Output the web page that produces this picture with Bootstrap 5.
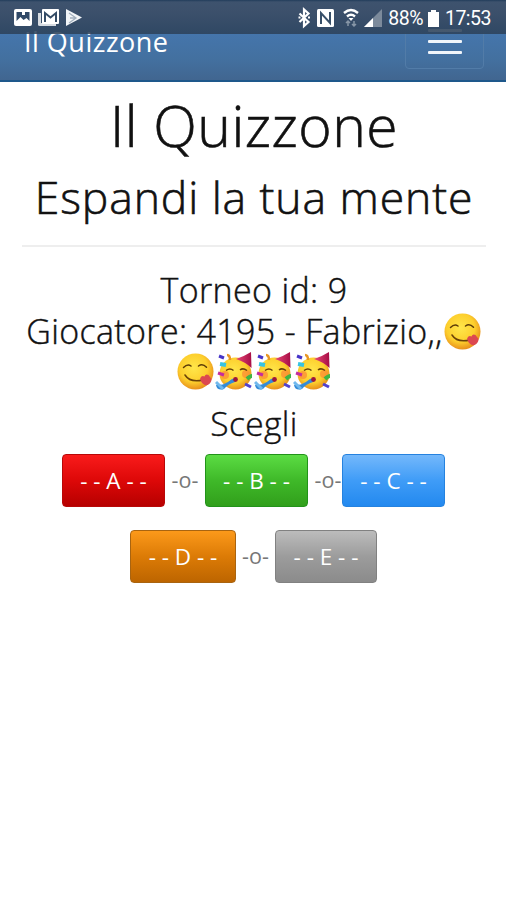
<!DOCTYPE html>
<html lang="it">
<head>
<meta charset="utf-8">
<meta name="viewport" content="width=device-width, initial-scale=1">
<title>Il Quizzone</title>
<link href="https://cdn.jsdelivr.net/npm/bootstrap@5.3.0/dist/css/bootstrap.min.css" rel="stylesheet">
<style>
body{font-family:"Open Sans","Noto Sans",sans-serif;color:#111;min-height:900px;overflow:hidden}
.statusbar{height:34px;background:linear-gradient(rgba(31,57,86,.94) 0,rgba(61,79,103,.9) 2px,rgba(59,76,100,.9) 12px,rgba(45,66,90,.88) 33px);z-index:5;padding:3px 15px 0 14px;font-family:Roboto,sans-serif;font-size:19.5px;letter-spacing:-.5px;line-height:31px;color:#fff}
.topnav{height:82px;background:linear-gradient(#4576ad 30px,#43709f 60px,#416690);border-bottom:2px solid #1e588b;padding:14px 22px 0 24px}
.topnav .navbar-brand{font-size:27px;line-height:36px;letter-spacing:.5px;margin-top:10px;color:#fff}
.topnav .navbar-toggler{width:79px;height:55px;border:1px solid #527ca8;border-radius:4px;gap:8px;background:none}
.bar{width:34px;height:3px;border-radius:1px;background:#f0f5fa}
.content{padding:0 20px 0 22px}
.thin-text{font-weight:300;-webkit-text-stroke:.6px #111}
.title{font-size:57px;line-height:62px;padding-top:12px;letter-spacing:.45px}
.subtitle{font-size:44.5px;line-height:60px;margin-top:11px;letter-spacing:.9px}
.rule{height:2px;background:#eee;margin-top:18px}
.info{font-size:34px;line-height:40.5px;padding-top:23px;letter-spacing:.34px}
.choose{font-size:33.5px;line-height:40px;margin-top:12px;letter-spacing:.4px}
.info.thin-text,.choose.thin-text{-webkit-text-stroke-width:.4px}
.emo{width:39px;height:40px}
.answers{margin-top:11px}
.answers-next{margin-top:23px}
.answer{height:53px;width:103px;border-radius:4px;font-size:22.5px;line-height:1;padding:1px 0 0;color:#fff!important;border:1px solid;white-space:pre}
.a-red{background:linear-gradient(#f91b1b,#dd0808 50%,#b60000);border-color:#b80808}
.a-green{background:linear-gradient(#5bdc43,#3fb929 50%,#319f1b);border-color:#22931a}
.a-blue{background:linear-gradient(#74b8fb,#3f9cf7 50%,#2389ef);border-color:#2582df}
.a-orange{background:linear-gradient(#fc991a,#dc7b06 50%,#bd6500);border-color:#a96410;width:106px}
.a-gray{background:linear-gradient(#bcbcbc,#9c9c9c 50%,#8b8b8b);border-color:#818181;width:102px}
.answers,.answers-next{padding-right:1px}
.sep{color:#777;font-size:21.5px;line-height:51px;width:40px}
.sep-tight{width:34px;padding-left:6px}
.answers-next .sep{width:39px}
</style>
<script src="https://cdn.jsdelivr.net/npm/bootstrap@5.3.0/dist/js/bootstrap.bundle.min.js"></script>
</head>
<body class="bg-white">
<svg width="0" height="0" class="position-absolute" aria-hidden="true">
<defs>
<radialGradient id="face" cx=".45" cy=".4" r=".6"><stop offset="0" stop-color="#ffe64a"/><stop offset=".65" stop-color="#fdcf2d"/><stop offset="1" stop-color="#e8901c"/></radialGradient>
<linearGradient id="hat"><stop offset="0" stop-color="#e64a78"/><stop offset="1" stop-color="#a80d45"/></linearGradient>
<symbol id="yum" viewBox="0 0 39 40">
<circle cx="19.5" cy="20.5" r="18" fill="url(#face)"/>
<path d="M7.500 16.500q4-4 7.500-1.500M22.500 15q4-3 8 1.300" fill="none" stroke="#5e3d08" stroke-width="1.500" stroke-linecap="round"/>
<path d="M9 24q5 8 18 5" fill="none" stroke="#6b4208" stroke-width="1.500" stroke-linecap="round"/>
<path d="M24 28q1-4 4.500-2.500 1-3 4-1.500l3 4q0 4-4 6-5 1-7.500-6z" fill="#dc4850"/>
</symbol>
<symbol id="party" viewBox="0 0 39 40">
<circle cx="20.500" cy="22.500" r="16" fill="url(#face)"/>
<circle cx="10" cy="24" r="4" fill="#fb8d35" opacity=".75"/><circle cx="31" cy="23" r="4" fill="#fb8d35" opacity=".75"/>
<path d="M11 19.500q4-3 7.500 0M25 19q3-2.500 7 .5" fill="none" stroke="#654009" stroke-width="1.500"/>
<path d="M21 8q7-2 15-7l.5 16q-6-6-15.500-9z" fill="url(#hat)"/>
<path d="M3 33q4 3 14-5l4-1-1 4q-7 2-11 7-7 2-8-4z" fill="#348bd8"/><path d="M1 31l7 7" stroke="#71b9ed" stroke-width="3"/>
<circle cx="20.500" cy="28.500" r="2.400" fill="#9c183a"/>
<path d="M4 5l5 2" stroke="#4634c8" stroke-width="3"/><path d="M12 4q3 0 3 5" stroke="#e99825" stroke-width="2.500" fill="none"/>
<path d="M5 13l6 1" stroke="#37c4e4" stroke-width="4"/><path d="M3 22l6 2" stroke="#c32d9e" stroke-width="3"/><path d="M32 28q3-3 5-3" stroke="#3eb544" stroke-width="4"/><path d="M30 33l6 3" stroke="#5142cf" stroke-width="3"/>
</symbol>
</defs>
</svg>
<div class="statusbar position-absolute top-0 start-0 w-100 d-flex align-items-start">
<svg width="74" height="30" viewBox="14 3 74 30" aria-hidden="true">
<rect x="14" y="9" width="18" height="17" rx="2" fill="#fff"/><path d="M16.500 12h13v9l-3-3-3 2-3-3-4 4z" fill="#304967"/><path d="M22 12h3v3h-3z" fill="#fff"/>
<path d="M38 13v12q0 1 2 1h16v-3H41V13z" fill="#d7dce2"/><rect x="42" y="9" width="17" height="15" rx="1" fill="#fff"/><path d="M45 22V13l5.500 4.500L56 13v9" fill="none" stroke="#344b65" stroke-width="2"/>
<path d="M66 9l16 8.500L66 26z" fill="#f2f5f8"/><path d="M69 13l7 5-7 5M70 18h5" fill="none" stroke="#a2afbd" stroke-width="1.300"/>
</svg>
<svg class="ms-auto flex-shrink-0" width="86" height="30" viewBox="297 3 86 30" aria-hidden="true">
<path d="M299.500 13.500l9 8.500-4.500 4V9.500l4.500 4-9 8.500" fill="none" stroke="#fff" stroke-width="2.200"/><path d="M298.500 17.500h2M308 17.500h2" stroke="#fff" stroke-width="2"/>
<rect x="317" y="9" width="17" height="18" rx="1.500" fill="#fff"/><path d="M321 24V13l9 10V12" fill="none" stroke="#385069" stroke-width="2"/>
<path d="M344 13q7-6 14 0M347 16.500q4-3.500 8 0" fill="none" stroke="#fff" stroke-width="2.400"/><path d="M348.500 18h5L351 21z" fill="#fff"/><path d="M348 21v5m-2-3l2-2 2 2M354 21v5m-2-2l2 2 2-2" fill="none" stroke="#8796a7" stroke-width="1.500"/>
<path d="M364 27L382 9v18z" fill="#7c8a9b"/><path d="M364 27l9-9v9z" fill="#fff"/>
</svg>
<span class="batt-text ms-1 ps-0">&#8202;88%</span>
<svg class="ms-1 me-1 flex-shrink-0" width="14" height="30" viewBox="426 3 14 30" aria-hidden="true"><path d="M430 10h5v2h3v15h-11V12h3z" fill="#fff"/></svg>
<span class="clock">17:53</span>
</div>
<nav class="topnav navbar d-flex flex-nowrap align-items-start">
<a class="navbar-brand p-0 me-0" href="#">Il Quizzone</a>
<button class="navbar-toggler p-0 d-flex flex-column align-items-center justify-content-center" type="button" aria-label="Menu"><span class="bar"></span><span class="bar"></span><span class="bar"></span></button>
</nav>
<main class="content text-center">
<h1 class="title thin-text mb-0"><span>Il Quizzone</span></h1>
<h2 class="subtitle thin-text mb-0 text-nowrap"><span>Espandi la tua mente</span></h2>
<div class="rule"></div>
<div class="info thin-text">
<div>Torneo id: 9</div>
<div class="d-flex justify-content-center align-items-center text-nowrap"><span>Giocatore: 4195 - Fabrizio,,</span><svg class="emo flex-shrink-0"><use href="#yum"/></svg></div>
<div class="d-flex justify-content-center"><svg class="emo"><use href="#yum"/></svg><svg class="emo"><use href="#party"/></svg><svg class="emo"><use href="#party"/></svg><svg class="emo"><use href="#party"/></svg></div>
</div>
<div class="choose thin-text">Scegli</div>
<div class="answers d-flex justify-content-center">
<button class="btn answer a-red">- - A - -</button><span class="sep">-o-</span><button class="btn answer a-green">- - B - -</button><span class="sep sep-tight">-o-</span><button class="btn answer a-blue">- - C - -</button>
</div>
<div class="answers-next d-flex justify-content-center">
<button class="btn answer a-orange">- - D - -</button><span class="sep">-o-</span><button class="btn answer a-gray">- - E - -</button>
</div>
</main>
</body>
</html>
